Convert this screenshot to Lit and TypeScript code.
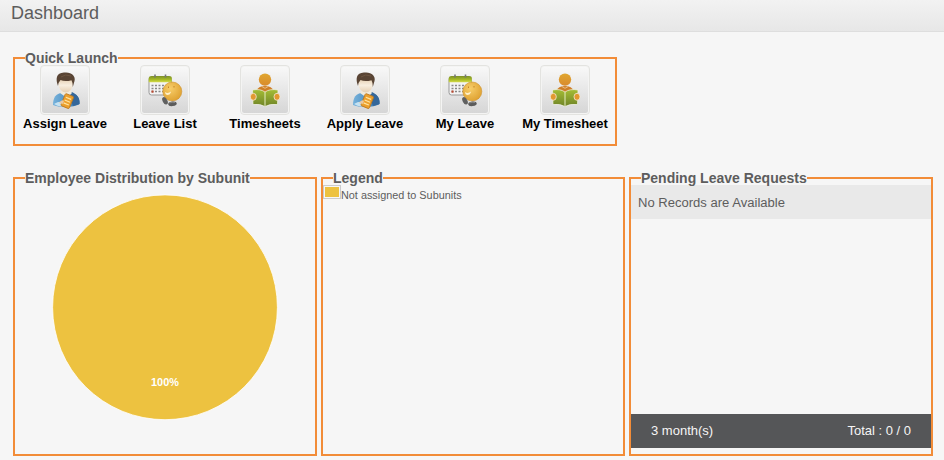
import { LitElement, html, css, svg } from "lit";
import { customElement, property } from "lit/decorators.js";

const person = svg`
  <path d="M13 40C13 32 16 29 22 27.500L31 27C37 29 40 33 39.500 39C34 43 18 42.500 13 40Z" fill="url(#shirt)"/>
  <path d="M31 27C37 29 40 33 39.500 39L33 41L29 30Z" fill="#35679a"/>
  <path d="M14 39Q20 35 25 38L26 41Q18 42.500 14 39Z" fill="#c5e2f2"/>
  <path d="M20 28L23 25H30L32 28L27 33Z" fill="#f1eadb"/>
  <ellipse cx="25.700" cy="18.500" rx="7.300" ry="9" fill="url(#skin)"/>
  <path d="M18 21C15.500 14 16 8 24 7.600C31 6.500 36 11 34.500 16L32.800 22Q33 18 31.500 15.200Q25 17 20.500 15Q18.500 17 18 21Z" fill="#594434"/>
  <path d="M21 12Q25 8.500 31 11" stroke="#6e5540" stroke-width="1" fill="none"/>
  <g transform="rotate(22 27 36)">
    <rect x="22.800" y="29.500" width="9" height="13" rx="1.200" fill="#eca02d" stroke="#b97722" stroke-width=".8"/>
    <path d="M24.500 33H30.200M24.500 36H30.200M24.500 39H30.200" stroke="#ffe4a1" stroke-width="1.200"/>
  </g>
  <path d="M19 38Q22 34 24 36L22.500 39Z" fill="#e9c8a2"/>`;

const calendar = svg`
  <rect x="9" y="12" width="22.500" height="18" rx="2.500" fill="#f4f4f4" stroke="#999" stroke-width="1"/>
  <path d="M8.700 17.300V13Q9 11 11.500 11H29Q31.800 11 31.800 13V17.300Z" fill="url(#leaf)"/>
  <path d="M15 9.500V12.500M25.500 9.500V12.500" stroke="#777" stroke-width="1.600"/>
  <path d="M11.500 20.500H29M11.500 23.500H25M11.500 26.500H23" stroke="#888" stroke-width="1.700" stroke-dasharray="2 1.500"/>
  <rect x="11.500" y="25.500" width="2" height="2.200" fill="#bd4930"/>
  <circle cx="32.300" cy="26.500" r="9.500" fill="url(#gold)" stroke="#cf922d" stroke-width=".6"/>
  <path d="M25 27Q28 29 31 26.500Q30.500 30 27 30Q25 29.500 25 27Z" fill="#fff1cc"/>
  <path d="M28.500 21.500V23M34 21V22.500" stroke="#be7f25" stroke-width=".9"/>
  <ellipse cx="25" cy="35.800" rx="2.300" ry="4" transform="rotate(-28 25 35.800)" fill="#606060"/>
  <ellipse cx="32.500" cy="38.800" rx="4.300" ry="2.300" transform="rotate(-8 32.500 38.800)" fill="#5b5b5b"/>
  <path d="M29.500 38Q32 36.700 35 37.500" stroke="#999" stroke-width=".7" fill="none"/>`;

const reader = svg`
  <circle cx="25" cy="14.600" r="6.200" fill="url(#amber)"/>
  <path d="M16.500 26Q18 21 25 21Q32 21 33.500 26L25 27.500Z" fill="#cf7f28"/>
  <path d="M21.500 21.300L25 23.300L28.500 21.300" fill="none" stroke="#ecc998" stroke-width=".8"/>
  <path d="M12.500 25Q20 23.500 25 27Q30 23.500 38 25L37.500 39.500Q30 38.500 25 41.500Q20 38.500 13 39.500Z" fill="url(#book)" stroke="#f3f4e8" stroke-width=".7"/>
  <path d="M25 27V41" stroke="#e7edc0" stroke-width="1"/>
  <ellipse cx="13.300" cy="31.800" rx="3" ry="3.500" fill="#e2982f" stroke="#f5ead6" stroke-width=".8"/>
  <ellipse cx="37" cy="31.800" rx="3" ry="3.500" fill="#e2982f" stroke="#f5ead6" stroke-width=".8"/>`;

const icons: Record<string, unknown> = { person, calendar, reader };

@customElement("launch-item")
class LaunchItem extends LitElement {
  @property() icon = "person";
  @property() label = "";

  static styles = css`
    :host { display: flex; flex-direction: column; align-items: center; width: 100px; }
    .tile { display: block; width: 50px; height: 50px; }
    .label { font-size: 13px; font-weight: bold; line-height: 15px; margin-top: 1px; color: #000; white-space: nowrap; }
  `;

  render() {
    return html`
      <svg class="tile" viewBox="0 0 50 50">
        <defs>
          <linearGradient id="tile" x2="0" y2="1"><stop stop-color="#f8f8f8"/><stop offset="1" stop-color="#d6d6d6"/></linearGradient>
          <linearGradient id="shirt" x2="1" y2="0"><stop stop-color="#75b2dc"/><stop offset="1" stop-color="#3673a9"/></linearGradient>
          <linearGradient id="skin" x2="0" y2="1"><stop stop-color="#d9ba93"/><stop offset=".6" stop-color="#f8eedf"/><stop offset="1" stop-color="#e5ceb0"/></linearGradient>
          <linearGradient id="leaf" x2="0" y2="1"><stop stop-color="#7c9027"/><stop offset=".6" stop-color="#a9bd25"/><stop offset="1" stop-color="#d6dc4c"/></linearGradient>
          <radialGradient id="gold" cx=".4" cy=".35" r=".7"><stop stop-color="#f7cd69"/><stop offset="1" stop-color="#dea02f"/></radialGradient>
          <linearGradient id="amber" x2="0" y2="1"><stop stop-color="#e0a72f"/><stop offset="1" stop-color="#d98a2d"/></linearGradient>
          <linearGradient id="book" x2="0" y2="1"><stop stop-color="#a5bd35"/><stop offset="1" stop-color="#6f8428"/></linearGradient>
        </defs>
        <rect x=".5" y=".5" width="49" height="49" rx="3.500" fill="#f4f4f3" stroke="#e3e3e0"/>
        <rect x="2" y="2" width="46" height="46" rx="2.500" fill="url(#tile)"/>
        ${icons[this.icon]}
      </svg>
      <span class="label">${this.label}</span>
    `;
  }
}

@customElement("titled-panel")
class TitledPanel extends LitElement {
  @property() heading = "";

  static styles = css`
    :host { display: flex; flex-direction: column; box-sizing: border-box; border: 2px solid #f28c38; }
    .heading { z-index: 1; width: fit-content; height: 16px; margin: -9px 0 -1px 10px; background: linear-gradient(#f6f6f6 15px, transparent 15px); color: #5d5d5d; font-size: 14px; line-height: 16px; font-weight: bold; white-space: nowrap; }
    .body { flex: 1; display: flex; flex-direction: column; }
  `;

  render() {
    return html`<h2 class="heading">${this.heading}</h2><div class="body"><slot></slot></div>`;
  }
}

@customElement("app-root")
class AppRoot extends LitElement {
  static styles = css`
    :host { display: block; height: 460px; overflow: hidden; background: #f6f6f6; color: #5d5d5d; font-family: "Liberation Sans", Arial, sans-serif; }
    .header { box-sizing: border-box; height: 32px; padding: 2px 11px 0; border-bottom: 1px solid #dedede; background: linear-gradient(#f2f2f2, #e7e7e7); }
    .title { margin: 0; font-size: 18px; line-height: 22px; font-weight: normal; }
    .content { display: flex; flex-direction: column; gap: 31px; padding: 25px 0 0 13px; }
    .launch { width: 604px; height: 89px; }
    .items { display: flex; }
    .row { display: flex; gap: 4px; }
    .panel { width: 304px; height: 279px; }
    .pie { display: block; width: 300px; height: 260px; }
    .percent { font-size: 10.9px; font-weight: bold; fill: #fff; }
    .key { display: flex; font-size: 10.85px; line-height: 13px; }
    .swatch { box-sizing: border-box; width: 18px; height: 14px; border: 1px solid #ccc; padding: 1px; background: #edc240 content-box; }
    .key-label { margin-top: 4px; }
    .empty { box-sizing: border-box; height: 34px; padding-left: 7px; background: #e9e9e9; font-size: 13.05px; line-height: 35px; }
    .summary { display: flex; justify-content: space-between; box-sizing: border-box; height: 34px; margin: auto 0 6px; padding: 0 20px; background: #555658; color: #f5f5f5; font-size: 13px; line-height: 33px; }
  `;

  private launchers = [
    ["person", "Assign Leave"],
    ["calendar", "Leave List"],
    ["reader", "Timesheets"],
    ["person", "Apply Leave"],
    ["calendar", "My Leave"],
    ["reader", "My Timesheet"],
  ];

  render() {
    return html`
      <header class="header"><h1 class="title">Dashboard</h1></header>
      <main class="content">
        <titled-panel class="launch" heading="Quick Launch">
          <div class="items">
            ${this.launchers.map(([icon, label]) => html`<launch-item .icon=${icon} .label=${label}></launch-item>`)}
          </div>
        </titled-panel>
        <div class="row">
          <titled-panel class="panel" heading="Employee Distribution by Subunit">
            <svg class="pie" viewBox="0 0 300 260">
              <circle cx="150" cy="122.300" r="112.400" fill="#edc240" stroke="#fff" stroke-width=".8"/>
              <text class="percent" x="150" y="201" text-anchor="middle">100%</text>
            </svg>
          </titled-panel>
          <titled-panel class="panel" heading="Legend">
            <div class="key"><span class="swatch"></span><span class="key-label">Not assigned to Subunits</span></div>
          </titled-panel>
          <titled-panel class="panel" heading="Pending Leave Requests">
            <div class="empty">No Records are Available</div>
            <div class="summary"><span>3 month(s)</span><span>Total : 0 / 0</span></div>
          </titled-panel>
        </div>
      </main>
    `;
  }
}
